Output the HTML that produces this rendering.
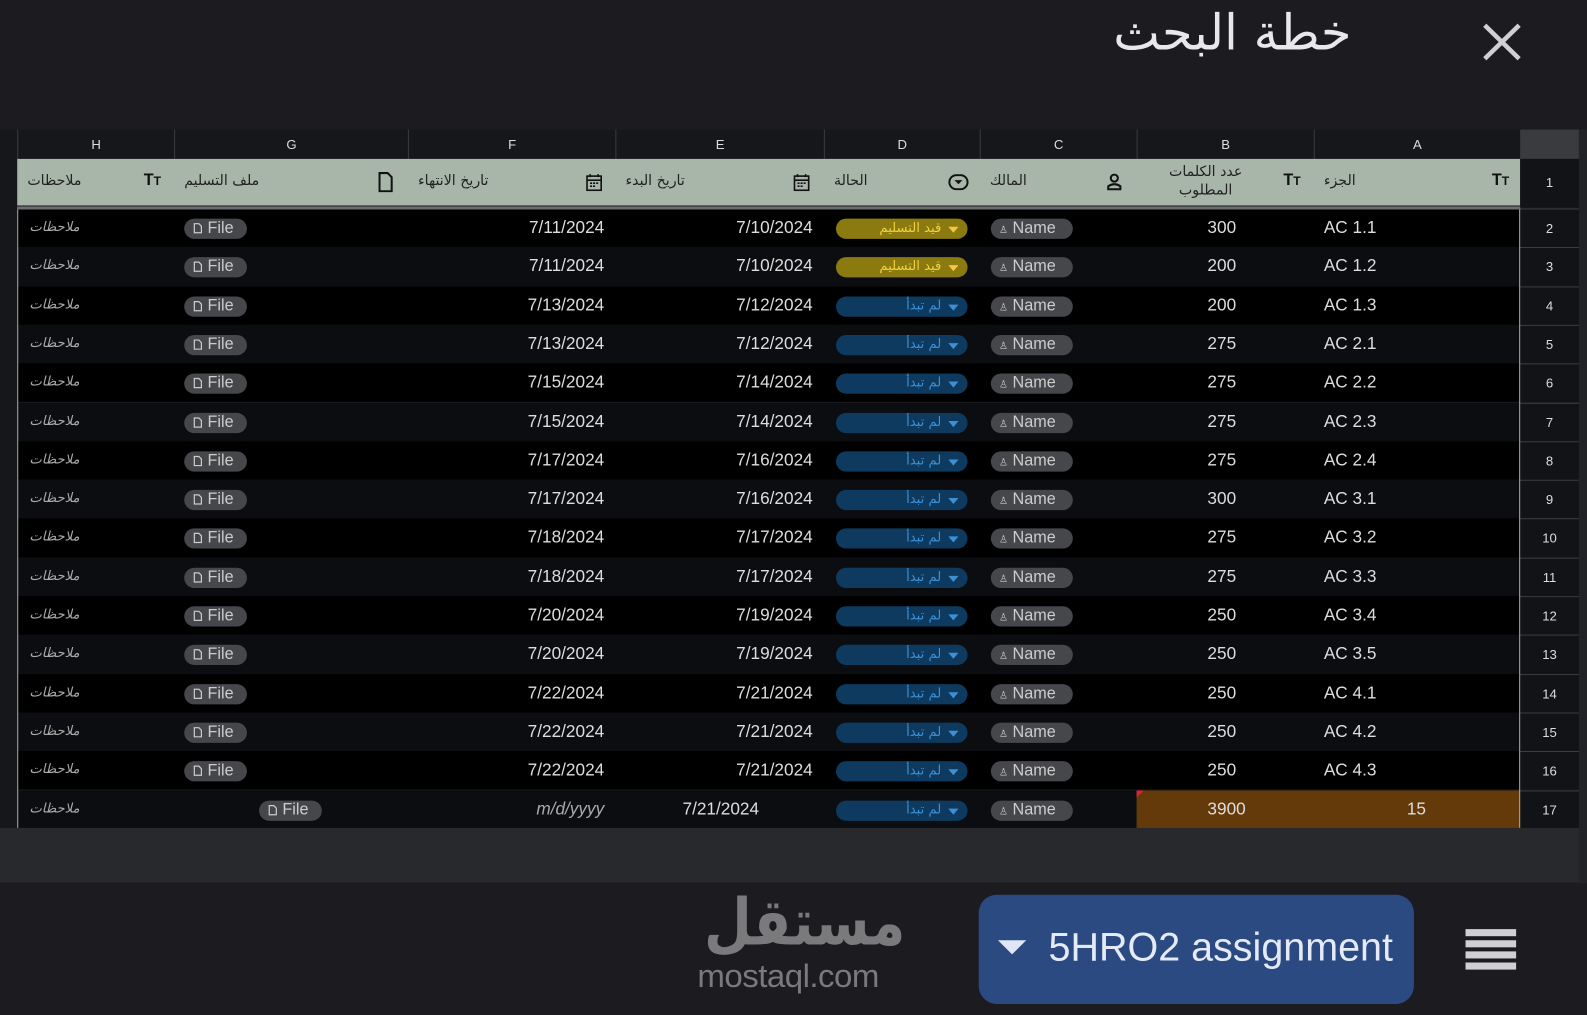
<!DOCTYPE html>
<html><head><meta charset="utf-8"><style>
*{margin:0;padding:0;box-sizing:border-box}
body{width:1587px;height:1015px;background:#1b1b20;overflow:hidden;font-family:"Liberation Sans","Noto Sans CJK SC",sans-serif;color:#d8d8d8}
#w{position:absolute;left:0;top:0;width:1568px;height:1003px;transform:scale(1.0121);transform-origin:0 0}
.a{position:absolute}
.title{left:1100px;top:4px;font-size:49px;color:#e8e8ea;font-family:"DejaVu Sans","Noto Sans CJK SC",sans-serif;font-weight:300}
.colh{top:128px;height:29px;background:#16171b;font-size:13px;color:#ddd;text-align:center;line-height:29px;border-left:1px solid #3a3b40}
.hdr{top:157px;height:46px;background:#a8b6aa;left:17px;width:1485px}
.hl{font-size:14px;color:#222;font-family:"DejaVu Sans",sans-serif}
.row{left:17px;width:1485px;height:38.3px}
.rn{left:1502px;width:58px;font-size:13px;text-align:center;color:#ddd;background:#121317;border-top:1px solid #3c3d42}
.c{font-size:17px;color:#ddd;top:0}
.r{text-align:right;width:120px}
.pill{border-radius:10px;height:20px;font-size:16px;line-height:20px}
.ar{font-family:"DejaVu Sans",sans-serif;font-size:13px}
</style></head><body><div id="w">
<div class="a title">خطة البحث</div>
<svg class="a" style="left:1463px;top:21px" width="42" height="40"><path d="M4 4L38 37M38 4L4 37" stroke="#cfd0d4" stroke-width="4.5"/></svg>
<div class="a" style="left:0;top:128px;width:17px;height:690px;background:#16171b"></div>
<div class="a" style="left:1560px;top:128px;width:27px;height:745px;background:#222327"></div>
<div id="t"></div>
<div class="a" style="left:0;top:818px;width:1560px;height:54px;background:#28292d"></div>
<div class="a" style="left:17px;top:204px;width:1485px;height:3px;background:#6b6e70"></div>
<div class="a" style="left:680px;top:880px;width:208px;text-align:center;font-size:64px;font-weight:bold;color:#7a7a7c;font-family:'DejaVu Sans',sans-serif;line-height:1;transform:scaleX(0.85)">مستقل</div>
<div class="a" style="left:689px;top:946px;font-size:32px;color:#7a7a7c;letter-spacing:-0.5px;transform:scaleX(1.02);transform-origin:0 0">mostaql.com</div>
<div class="a" style="left:967px;top:884px;width:430px;height:108px;background:#2c4a82;border-radius:18px"></div>
<div class="a" style="left:986px;top:929px;width:0;height:0;border-left:14px solid transparent;border-right:14px solid transparent;border-top:14px solid #dfe6f5"></div>
<div class="a" style="left:1036px;top:915px;font-size:39px;color:#e4eaf8">5HRO2 assignment</div>
<div class="a" style="left:1448px;top:918px;width:50px">
<div style="height:7px;background:#d0d0d4;margin-bottom:4px"></div><div style="height:7px;background:#d0d0d4;margin-bottom:4px"></div><div style="height:7px;background:#d0d0d4;margin-bottom:4px"></div><div style="height:7px;background:#d0d0d4"></div></div>
</div>
<script>
var cols=[['H',17,172],['G',172,403],['F',403,608],['E',608,814],['D',814,968],['C',968,1123],['B',1123,1298],['A',1298,1502]];
var h='';
cols.forEach(function(c){h+='<div class="a colh" style="left:'+c[1]+'px;width:'+(c[2]-c[1])+'px">'+c[0]+'</div>'});
h+='<div class="a" style="left:1502px;top:128px;width:58px;height:29px;background:#3a3b3f"></div>';
h+='<div class="a hdr"></div><div class="a rn" style="top:157px;height:48px;line-height:48px;border:0">1</div>';
var hl=[[27,'ملاحظات'],[182,'ملف التسليم'],[413,'تاريخ الانتهاء'],[618,'تاريخ البدء'],[824,'الحالة'],[978,'المالك'],[1308,'الجزء']];
hl.forEach(function(x){h+='<div class="a hl" style="left:'+x[0]+'px;top:171px">'+x[1]+'</div>'});
h+='<div class="a hl" style="left:1155px;top:161px;text-align:center;line-height:18px">عدد الكلمات<br>المطلوب</div>';
[142,1268,1474].forEach(function(x){h+='<div class="a" style="left:'+x+'px;top:170px;font-size:16px;font-weight:bold;color:#111">T<span style="font-size:12px">T</span></div>'});
h+='<svg class="a" style="left:373px;top:170px" width="16" height="20"><path d="M2 1H10L14 5V19H2Z" fill="none" stroke="#111" stroke-width="2"/></svg>';
[579,784].forEach(function(x){h+='<svg class="a" style="left:'+x+'px;top:171px" width="16" height="18"><rect x="1" y="3" width="14" height="14" fill="none" stroke="#111" stroke-width="1.6"/><path d="M1 7H15M4 1V4M12 1V4M4 10H6M7 10H9M10 10H12M4 13H6M7 13H9" stroke="#111" stroke-width="1.6"/></svg>'});
h+='<svg class="a" style="left:937px;top:172px" width="20" height="16"><rect x="1" y="1" width="18" height="14" rx="7" fill="none" stroke="#111" stroke-width="2"/><path d="M6 6L10 10L14 6Z" fill="#111"/></svg>';
h+='<svg class="a" style="left:1093px;top:171px" width="16" height="18"><circle cx="8" cy="5" r="3.5" fill="none" stroke="#111" stroke-width="2"/><path d="M2 16V13Q8 9 14 13V16Z" fill="none" stroke="#111" stroke-width="2"/></svg>';
var d=[['AC 1.1',300,'10','11',1],['AC 1.2',200,'10','11',1],['AC 1.3',200,'12','13'],['AC 2.1',275,'12','13'],['AC 2.2',275,'14','15'],['AC 2.3',275,'14','15'],['AC 2.4',275,'16','17'],['AC 3.1',300,'16','17'],['AC 3.2',275,'17','18'],['AC 3.3',275,'17','18'],['AC 3.4',250,'19','20'],['AC 3.5',250,'19','20'],['AC 4.1',250,'21','22'],['AC 4.2',250,'21','22'],['AC 4.3',250,'21','22'],['15',3900,'21','']];
var fileIc='<svg width="9" height="11" style="vertical-align:-1px;margin-right:5px"><path d="M1 1H5.5L8 3.5V10H1Z" fill="none" stroke="#ccc" stroke-width="1.2"/></svg>';
d.forEach(function(r,i){
 var y=206+i*38.3, last=i==15;
 h+='<div class="a row" style="top:'+y+'px;background:'+(i%2?'#0c0d10':'#000')+'"></div>';
 h+='<div class="a rn" style="top:'+y+'px;height:38.3px;line-height:38px">'+(i+2)+'</div>';
 var t=y+9;
 h+='<div class="a ar" style="left:29px;top:'+(t+2)+'px;color:#aaa;font-style:italic">ملاحظات</div>';
 var fx=last?256:182;
 h+='<div class="a pill" style="left:'+fx+'px;top:'+(t+1)+'px;width:62px;background:#45474b;color:#ccc;padding-left:9px">'+fileIc+'File</div>';
 if(!last)h+='<div class="a c r" style="left:477px;top:'+t+'px">7/'+r[3]+'/2024</div>';
 else h+='<div class="a c r" style="left:477px;top:'+t+'px;color:#aaa;font-style:italic">m/d/yyyy</div>';
 h+='<div class="a c r" style="left:'+(last?630:683)+'px;top:'+t+'px">7/'+r[2]+'/2024</div>';
 var st=r[4]?['#8a7a10','#f0d040','قيد التسليم','#f5c842']:['#0d3a5e','#3d8fd6','لم تبدأ','#3d8fd6'];
 h+='<div class="a pill ar" style="left:826px;top:'+(t+1)+'px;width:130px;background:'+st[0]+';color:'+st[1]+';text-align:right;padding-right:26px;line-height:19px">'+st[2]+'</div>';
 h+='<div class="a" style="left:937px;top:'+(t+9)+'px;border-left:5px solid transparent;border-right:5px solid transparent;border-top:6px solid '+st[3]+'"></div>';
 h+='<div class="a pill" style="left:979px;top:'+(t+1)+'px;width:81px;background:#45474b;color:#ccc;padding-left:8px"><span style="font-size:10px">♙</span> Name</div>';
 if(last)h+='<div class="a" style="left:1123px;top:'+y+'px;width:379px;height:38.3px;background:#653a0b"></div><div class="a" style="left:1123px;top:'+y+'px;border-right:7px solid transparent;border-top:7px solid #d23"></div>';
 h+='<div class="a c" style="left:1193px;top:'+t+'px">'+r[1]+'</div>';
 h+='<div class="a c" style="left:'+(last?1390:1308)+'px;top:'+t+'px">'+r[0]+'</div>';
});
h+='<div class="a" style="left:17px;top:205px;width:1px;height:613px;background:#aaa"></div><div class="a" style="left:1501px;top:205px;width:1px;height:613px;background:#aaa"></div>';
document.getElementById('t').innerHTML=h;
</script>
</body></html>
